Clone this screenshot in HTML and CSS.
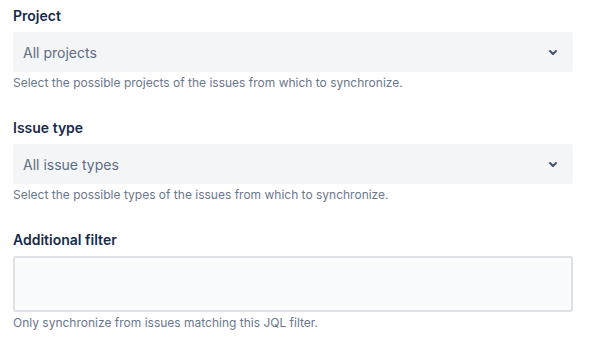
FILE: index.html
```html
<!DOCTYPE html>
<html>
<head>
<meta charset="utf-8">
<link rel="stylesheet" href="styles.css">
</head>
<body>
<form class="form">
  <div class="field">
    <label class="label">Project</label>
    <div class="select">
      <span class="select-value">All projects</span>
      <svg class="chevron" width="24" height="24" viewBox="0 0 24 24"><path d="M8.292 10.293a1.009 1.009 0 0 0 0 1.419l2.939 2.965c.218.215.5.322.779.322s.556-.107.769-.322l2.93-2.955a1.01 1.01 0 0 0 0-1.419.987.987 0 0 0-1.406 0l-2.298 2.317-2.307-2.327a.99.99 0 0 0-1.406 0z" fill="currentColor"/></svg>
    </div>
    <div class="helper">Select the possible projects of the issues from which to synchronize.</div>
  </div>
  <div class="field">
    <label class="label">Issue type</label>
    <div class="select">
      <span class="select-value">All issue types</span>
      <svg class="chevron" width="24" height="24" viewBox="0 0 24 24"><path d="M8.292 10.293a1.009 1.009 0 0 0 0 1.419l2.939 2.965c.218.215.5.322.779.322s.556-.107.769-.322l2.93-2.955a1.01 1.01 0 0 0 0-1.419.987.987 0 0 0-1.406 0l-2.298 2.317-2.307-2.327a.99.99 0 0 0-1.406 0z" fill="currentColor"/></svg>
    </div>
    <div class="helper">Select the possible types of the issues from which to synchronize.</div>
  </div>
  <div class="field">
    <label class="label">Additional filter</label>
    <div class="textarea"></div>
    <div class="helper">Only synchronize from issues matching this JQL filter.</div>
  </div>
</form>
</body>
</html>
```
FILE: styles.css
```css
html, body {
  margin: 0;
  padding: 0;
  background: #ffffff;
}
body {
  font-family: Inter, "Noto Sans", sans-serif;
  color: #172b4d;
}
.form {
  display: flex;
  flex-direction: column;
  gap: 29px;
  padding: 8px 18px 0 13px;
}
.field {
  display: flex;
  flex-direction: column;
}
.label {
  font-size: 14px;
  line-height: 16px;
  font-weight: 600;
  color: #172b4d;
  margin-bottom: 8px;
}
.select {
  height: 40px;
  box-sizing: border-box;
  background: #f4f5f7;
  border-radius: 3px;
  display: flex;
  align-items: center;
  justify-content: space-between;
  padding: 0 8px 0 10px;
}
.select-value {
  font-size: 14px;
  color: #5e6c84;
}
.chevron {
  color: #42526e;
}
.textarea {
  height: 56px;
  box-sizing: border-box;
  background: #fafbfc;
  border: 2px solid #dfe1e6;
  border-radius: 3px;
}
.helper {
  margin-top: 3px;
  font-size: 12px;
  line-height: 16px;
  color: #6b778c;
}
```
